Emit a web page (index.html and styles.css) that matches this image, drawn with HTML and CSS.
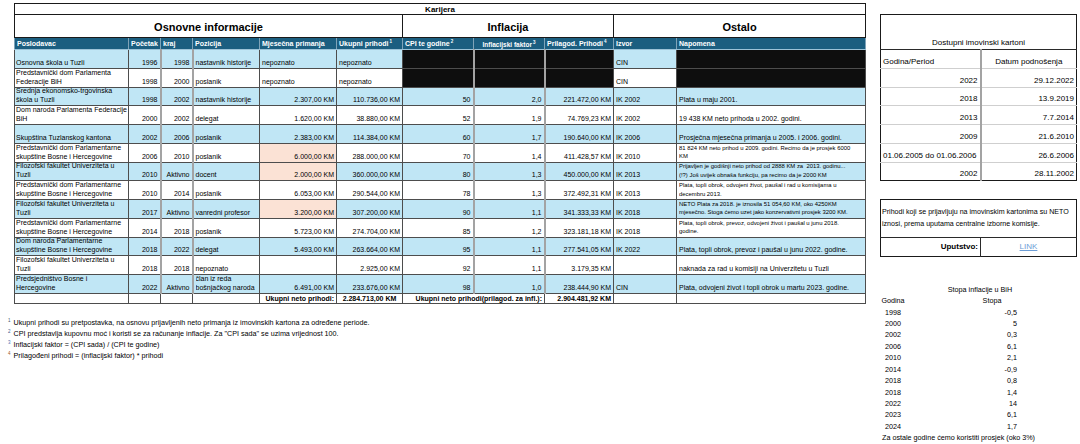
FILE: index.html
```html
<!DOCTYPE html>
<html lang="bs">
<head>
<meta charset="utf-8">
<title>Karijera</title>
<link rel="stylesheet" href="styles.css">
</head>
<body>
<div class="page">
  <div class="left">
    <table class="sheet">
      <colgroup>
        <col class="c1"><col class="c2"><col class="c3"><col class="c4"><col class="c5"><col class="c6"><col class="c7"><col class="c8"><col class="c9"><col class="c10"><col class="c11">
      </colgroup>
      <tr class="r-title"><td colspan="11" class="karijera">Karijera</td></tr>
      <tr class="r-sec">
        <td colspan="6" class="sec">Osnovne informacije</td>
        <td colspan="3" class="sec">Inflacija</td>
        <td colspan="2" class="sec">Ostalo</td>
      </tr>
      <tr class="r-head">
        <th>Poslodavac</th><th>Početak</th><th>kraj</th><th>Pozicija</th><th>Mjesečna primanja</th>
        <th>Ukupni prihodi<sup>1</sup></th><th>CPI te godine<sup>2</sup></th><th class="hf">Inflacijski faktor<sup>3</sup></th>
        <th>Prilagod. Prihodi<sup>4</sup></th><th>Izvor</th><th>Napomena</th>
      </tr>
      <tr class="d b">
        <td>Osnovna škola u Tuzli</td><td class="n">1996</td><td class="n">1998</td><td>nastavnik historije</td><td>nepoznato</td><td>nepoznato</td>
        <td class="blk"></td><td class="blk"></td><td class="blk"></td><td>CIN</td><td class="blk"></td>
      </tr>
      <tr class="d">
        <td><div class="wrap">Predstavnički dom Parlamenta<br>Federacije BiH</div></td><td class="n">1998</td><td class="n">2000</td><td>poslanik</td><td>nepoznato</td><td>nepoznato</td>
        <td class="blk"></td><td class="blk"></td><td class="blk"></td><td>CIN</td><td class="blk"></td>
      </tr>
      <tr class="d b">
        <td><div class="wrap">Srednja ekonomsko-trgovinska<br>škola u Tuzli</div></td><td class="n">1998</td><td class="n">2002</td><td>nastavnik historije</td><td class="n">2.307,00 KM</td><td class="n">110.736,00 KM</td>
        <td class="n">50</td><td class="n">2,0</td><td class="n">221.472,00 KM</td><td>IK 2002</td><td>Plata u maju 2001.</td>
      </tr>
      <tr class="d">
        <td><div class="wrap">Dom naroda Parlamenta Federacije<br>BiH</div></td><td class="n">2000</td><td class="n">2002</td><td>delegat</td><td class="n">1.620,00 KM</td><td class="n">38.880,00 KM</td>
        <td class="n">52</td><td class="n">1,9</td><td class="n">74.769,23 KM</td><td>IK 2002</td><td>19 438 KM neto prihoda u 2002. godini.</td>
      </tr>
      <tr class="d b">
        <td>Skupština Tuzlanskog kantona</td><td class="n">2002</td><td class="n">2006</td><td>poslanik</td><td class="n">2.383,00 KM</td><td class="n">114.384,00 KM</td>
        <td class="n">60</td><td class="n">1,7</td><td class="n">190.640,00 KM</td><td>IK 2006</td><td>Prosječna mjesečna primanja u 2005. i 2006. godini.</td>
      </tr>
      <tr class="d">
        <td><div class="wrap">Predstavnički dom Parlamentarne<br>skupštine Bosne i Hercegovine</div></td><td class="n">2006</td><td class="n">2010</td><td>poslanik</td><td class="n pe">6.000,00 KM</td><td class="n">288.000,00 KM</td>
        <td class="n">70</td><td class="n">1,4</td><td class="n">411.428,57 KM</td><td>IK 2010</td><td class="sm"><div class="wrap">81 824 KM neto prihod u 2009. godini. Recimo da je prosjek 6000<br>KM</div></td>
      </tr>
      <tr class="d b">
        <td><div class="wrap">Filozofski fakultet Univerziteta u<br>Tuzli</div></td><td class="n">2010</td><td class="n">Aktivno</td><td>docent</td><td class="n pe">2.000,00 KM</td><td class="n">360.000,00 KM</td>
        <td class="n">80</td><td class="n">1,3</td><td class="n">450.000,00 KM</td><td>IK 2013</td><td class="sm"><div class="wrap">Prijavljen je godišnji neto prihod od 2888 KM za&nbsp; 2013. godinu...<br>(!?) Još uvijek obnaša funkciju, pa recimo da je 2000 KM</div></td>
      </tr>
      <tr class="d">
        <td><div class="wrap">Predstavnički dom Parlamentarne<br>skupštine Bosne i Hercegovine</div></td><td class="n">2010</td><td class="n">2014</td><td>poslanik</td><td class="n">6.053,00 KM</td><td class="n">290.544,00 KM</td>
        <td class="n">78</td><td class="n">1,3</td><td class="n">372.492,31 KM</td><td>IK 2013</td><td class="sm"><div class="wrap">Plata, topli obrok, odvojeni život, paušal i rad u komisijama u<br>decembru 2013.</div></td>
      </tr>
      <tr class="d b">
        <td><div class="wrap">Filozofski fakultet Univerziteta u<br>Tuzli</div></td><td class="n">2017</td><td class="n">Aktivno</td><td>vanredni profesor</td><td class="n pe">3.200,00 KM</td><td class="n">307.200,00 KM</td>
        <td class="n">90</td><td class="n">1,1</td><td class="n">341.333,33 KM</td><td>IK 2018</td><td class="sm"><div class="wrap">NETO Plata za 2018. je iznosila 51 054,60 KM, oko 4250KM<br>mjesečno. Stoga ćemo uzet jako konzervativni prosjek 3200 KM.</div></td>
      </tr>
      <tr class="d">
        <td><div class="wrap">Predstavnički dom Parlamentarne<br>skupštine Bosne i Hercegovine</div></td><td class="n">2014</td><td class="n">2018</td><td>poslanik</td><td class="n">5.723,00 KM</td><td class="n">274.704,00 KM</td>
        <td class="n">85</td><td class="n">1,2</td><td class="n">323.181,18 KM</td><td>IK 2018</td><td class="sm"><div class="wrap">Plata, topli obrok, prevoz, odvojeni život i paušal u junu 2018.<br>godine.</div></td>
      </tr>
      <tr class="d b">
        <td><div class="wrap">Dom naroda Parlamentarne<br>skupštine Bosne i Hercegovine</div></td><td class="n">2018</td><td class="n">2022</td><td>delegat</td><td class="n">5.493,00 KM</td><td class="n">263.664,00 KM</td>
        <td class="n">95</td><td class="n">1,1</td><td class="n">277.541,05 KM</td><td>IK 2022</td><td>Plata, topli obrok, prevoz i paušal u junu 2022. godine.</td>
      </tr>
      <tr class="d">
        <td><div class="wrap">Filozofski fakultet Univerziteta u<br>Tuzli</div></td><td class="n">2018</td><td class="n">2018</td><td>nepoznato</td><td class="n"></td><td class="n">2.925,00 KM</td>
        <td class="n">92</td><td class="n">1,1</td><td class="n">3.179,35 KM</td><td></td><td>naknada za rad u komisiji na Univerzitetu u Tuzli</td>
      </tr>
      <tr class="d b">
        <td><div class="wrap">Predsjedništvo Bosne i<br>Hercegovine</div></td><td class="n">2022</td><td class="n">Aktivno</td><td><div class="wrap">član iz reda<br>bošnjačkog naroda</div></td><td class="n">6.491,00 KM</td><td class="n">233.676,00 KM</td>
        <td class="n">98</td><td class="n">1,0</td><td class="n">238.444,90 KM</td><td>CIN</td><td>Plata, odvojeni život i topli obrok u martu 2023. godine.</td>
      </tr>
      <tr class="tot">
        <td></td><td></td><td></td><td></td>
        <td class="n">Ukupni neto prihodi:</td><td class="ctr">2.284.713,00 KM</td>
        <td colspan="2" class="n">Ukupni neto prihodi(prilagod. za infl.):</td><td class="n">2.904.481,92 KM</td>
        <td></td><td></td>
      </tr>
    </table>

    <div class="notes">
      <p><sup class="s1">1</sup> Ukupni prihodi su pretpostavka, na osnovu prijavljenih neto primanja iz imovinskih kartona za određene periode.</p>
      <p><sup class="s2">2</sup> CPI predstavlja kupovnu moć i koristi se za računanje inflacije. Za "CPI sada" se uzima vrijednost 100.</p>
      <p><sup class="s3">3</sup> Inflacijski faktor = (CPI sada) / (CPI te godine)</p>
      <p><sup class="s4">4</sup> Prilagođeni prihodi = (inflacijski faktor) * prihodi</p>
    </div>
  </div>

  <div class="right">
    <table class="box">
      <colgroup><col class="bc1"><col class="bc2"></colgroup>
      <tr class="bt"><td colspan="2">Dostupni imovinski kartoni</td></tr>
      <tr class="br bh"><td>Godina/Period</td><td class="ctr">Datum podnošenja</td></tr>
      <tr class="br"><td class="n">2022</td><td class="n">29.12.2022</td></tr>
      <tr class="br"><td class="n">2018</td><td class="n">13.9.2019</td></tr>
      <tr class="br"><td class="n">2013</td><td class="n">7.7.2014</td></tr>
      <tr class="br"><td class="n">2009</td><td class="n">21.6.2010</td></tr>
      <tr class="br"><td>01.06.2005 do 01.06.2006</td><td class="n">26.6.2006</td></tr>
      <tr class="br last"><td class="n">2002</td><td class="n">28.11.2002</td></tr>
    </table>

    <table class="box info">
      <colgroup><col class="bc1"><col class="bc2"></colgroup>
      <tr class="it"><td colspan="2">Prihodi koji se prijavljuju na imovinskim kartonima su NETO<br>iznosi, prema uputama centralne izborne komisije.</td></tr>
      <tr class="iu"><td class="n strong">Uputstvo:</td><td class="ctr"><a class="link" href="#">LINK</a></td></tr>
    </table>

    <div class="infl-title">Stopa inflacije u BiH</div>
    <div class="infl">
      <div class="yh">Godina</div><div></div><div class="vh">Stopa</div>
      <div class="y">1998</div><div></div><div class="v">-0,5</div>
      <div class="y">2000</div><div></div><div class="v">5</div>
      <div class="y">2002</div><div></div><div class="v">0,3</div>
      <div class="y">2006</div><div></div><div class="v">6,1</div>
      <div class="y">2010</div><div></div><div class="v">2,1</div>
      <div class="y">2014</div><div></div><div class="v">-0,9</div>
      <div class="y">2018</div><div></div><div class="v">0,8</div>
      <div class="y">2018</div><div></div><div class="v">1,4</div>
      <div class="y">2022</div><div></div><div class="v">14</div>
      <div class="y">2023</div><div></div><div class="v">6,1</div>
      <div class="y">2024</div><div></div><div class="v">1,7</div>
    </div>
    <div class="infl-note">Za ostale godine ćemo koristiti prosjek (oko 3%)</div>
  </div>
</div>
</body>
</html>
```

FILE: styles.css
```css
* { box-sizing: border-box; }
html, body { margin: 0; padding: 0; background: #fff; }
body {
  width: 1080px;
  height: 444px;
  overflow: hidden;
  font-family: "Liberation Sans", Arial, sans-serif;
  color: #000;
}
.page { display: flex; align-items: flex-start; }
.left { width: 866px; padding-top: 3px; flex: none; }

/* ---------- main sheet ---------- */
.sheet {
  margin-left: 14px;
  width: 851px;
  border-collapse: collapse;
  table-layout: fixed;
  border: 1.5px solid #1a1a1a;
}
.c1 { width: 114px; } .c2 { width: 32px; } .c3 { width: 32px; } .c4 { width: 67px; }
.c5 { width: 77px; } .c6 { width: 66px; } .c7 { width: 71px; } .c8 { width: 71px; }
.c9 { width: 69px; } .c10 { width: 63px; } .c11 { width: 189px; }

.sheet td, .sheet th {
  padding: 0 2px 1px;
  font-size: 7px;
  line-height: 9px;
  vertical-align: bottom;
  white-space: nowrap;
  overflow: hidden;
  text-align: left;
  font-weight: normal;
  border: 1px solid #4d4d4d;
}
.sheet .d td:first-child { padding-left: 1px; padding-right: 0; }
.sheet .n { text-align: right; }
.sheet .ctr { text-align: center; }

.r-title { height: 11px; }
.sheet .karijera {
  font-size: 8px;
  font-weight: bold;
  text-align: center;
  vertical-align: middle;
  border: 1.5px solid #1a1a1a;
  padding: 0;
}
.r-sec { height: 23px; }
.sheet .sec {
  font-size: 11px;
  line-height: 13px;
  font-weight: bold;
  text-align: center;
  vertical-align: middle;
  padding: 3px 0 0;
  border: 1px solid #1a1a1a;
  border-bottom: 1.5px solid #1a1a1a;
}
.r-head { height: 12px; }
.sheet .r-head th {
  background: #1b5e80;
  color: #fff;
  font-weight: bold;
  vertical-align: middle;
  padding: 0 2px;
  border-top: 1.5px solid #1a1a1a;
  border-left: 1px solid #7fa3b8;
  border-right: 1px solid #7fa3b8;
  border-bottom: 1px solid #9cc3d8;
}
.sheet .r-head th.hf { font-size: 6.5px; text-align: center; padding-top: 2px; }
.sheet sup { font-size: 4.5px; line-height: 0; vertical-align: 3px; margin-left: 1px; }

.d { height: 18.75px; }
.sheet .d.b td { background: #c0e6f5; }
.sheet .d td.blk { background: #0e0e0e; }
.sheet .d td.pe { background: #fbe2d5; }
.sheet .d td:nth-child(3),
.sheet .d td:nth-child(4),
.sheet .d td:nth-child(8),
.sheet .d td:nth-child(9) { border-left: 2px solid #a3a3a3; }
.sheet .d td:nth-child(7),
.sheet .d td:nth-child(10) { border-left: 1.5px solid #1f1f1f; }

.wrap {
  height: 16.5px;
  overflow: hidden;
  display: flex;
  flex-direction: column;
  justify-content: flex-end;
}
.sheet td.sm { font-size: 5.9px; line-height: 8.5px; }

.tot { height: 10px; }
.sheet .tot td {
  font-weight: bold;
  border-top: 1.5px solid #1a1a1a;
  padding-bottom: 0;
  line-height: 9px;
  vertical-align: middle;
}

/* ---------- footnotes ---------- */
.notes { margin-top: 13px; padding-left: 8px; }
.notes p { margin: 0; font-size: 7.2px; line-height: 11px; white-space: nowrap; }
.notes sup { font-size: 4.5px; line-height: 0; vertical-align: 3px; margin-right: 1px; }
.notes .s1 { color: #44546a; }
.notes .s2 { color: #3a5b8c; }
.notes .s3 { color: #4a72b0; }
.notes .s4 { color: #9a5a2a; }

/* ---------- right column ---------- */
.right { width: 196px; margin-left: 14px; flex: none; }
.box {
  width: 196px;
  border-collapse: collapse;
  table-layout: fixed;
  border: 1.5px solid #1a1a1a;
}
.bc1 { width: 100px; } .bc2 { width: 96px; }
.box:first-child { margin-top: 14px; }
.box td {
  font-size: 8px;
  line-height: 10px;
  padding: 0 2px 1px;
  vertical-align: bottom;
  white-space: nowrap;
  overflow: hidden;
}
.box .n { text-align: right; }
.box .ctr { text-align: center; }
.bt { height: 35px; }
.bt td { text-align: center; border-bottom: 1px solid #2a2a2a; }
.br { height: 18.75px; }
.br td { border-bottom: 1px solid #cfcfcf; }
.br td:first-child { border-right: 2px solid #a3a3a3; }
.br.last td { border-bottom: none; }

.info { margin-top: 18px; }
.it { height: 38px; }
.it td { font-size: 7.1px; line-height: 12px; padding-left: 1px; vertical-align: middle; border-bottom: 1px solid #2a2a2a; }
.iu { height: 19px; }
.iu td { vertical-align: middle; }
.iu td:first-child { border-right: 1px solid #2a2a2a; }
.box .strong { font-weight: bold; }
.link { color: #6d9ed6; text-decoration: underline; }

.infl-title {
  margin-top: 28px;
  width: 200px;
  text-align: center;
  font-size: 7.2px;
  line-height: 10px;
}
.infl {
  display: grid;
  grid-template-columns: 26px 59px 54px;
  font-size: 7.2px;
  line-height: 11.4px;
}
.infl .yh, .infl .y { text-align: center; }
.infl .vh { text-align: center; }
.infl .v { text-align: right; padding-right: 2px; }
.infl-note {
  padding-left: 2px;
  font-size: 7.2px;
  line-height: 11.4px;
  white-space: nowrap;
}
```
